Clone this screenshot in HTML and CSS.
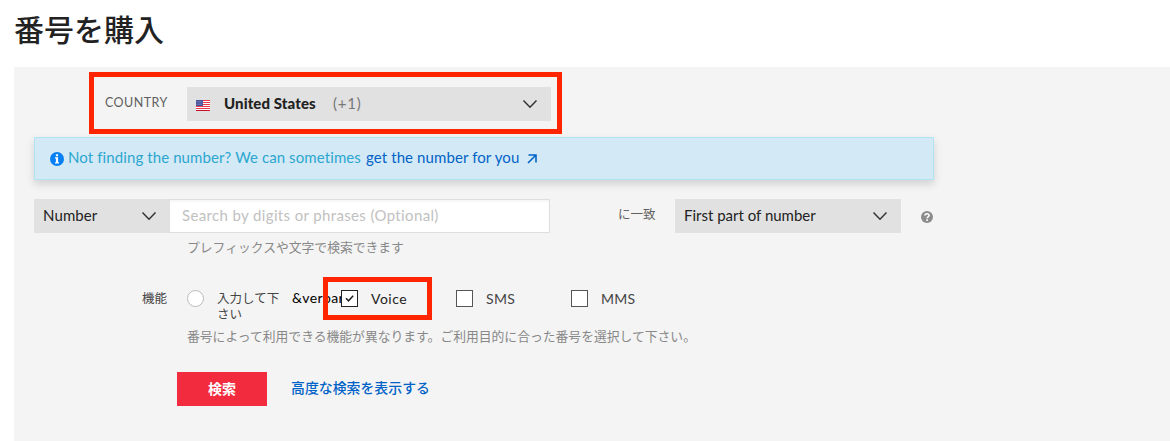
FILE: index.html
```html
<!DOCTYPE html>
<html lang="ja">
<head>
<meta charset="utf-8">
<title>番号を購入</title>
<link rel="stylesheet" href="styles.css">
</head>
<body>
<h1 class="title"><span class="t">番号を購入</span></h1>
<main class="panel">
  <div class="row country-row">
    <span class="country-label"><span class="t">COUNTRY</span></span>
    <div class="select country-select">
      <svg class="flag" width="14" height="11" viewBox="0 0 14 11"><path fill="#fff" d="M0 0h14v11H0z"/><path fill="#e8384a" d="M0 0h14v1H0zM0 2h14v1H0zM0 4h14v1H0zM0 6h14v1H0zM0 8h14v1H0z"/><path fill="#c8102e" d="M0 10h14v1H0z"/><path fill="#46529c" d="M0 0h7v6H0z"/><path stroke="#a9b0dc" stroke-width=".6" stroke-dasharray="1 1" d="M.5 1.5h6M1.5 3h5M.5 4.5h6"/></svg>
      <b class="country-name t">United States</b>
      <span class="dial t">(+1)</span>
      <svg class="chevron" width="16" height="10" viewBox="0 0 16 10"><path d="M1.5 1.5 8 8.2l6.500-6.700"/></svg>
    </div>
    <span class="highlight highlight-country"></span>
  </div>
  <div class="alert">
    <svg class="info" width="14" height="14" viewBox="0 0 14 14"><circle cx="7" cy="7" r="7" fill="#0780f5"/><path fill="#fff" d="M5.900 2.200h2.200v2H5.900zM5 5.200h3.100v5H9v1.300H5v-1.300h.9V6.500H5z"/></svg>
    <span class="alert-text t">Not finding the number? We can sometimes</span>
    <a class="alert-link t">get the number for you</a>
    <svg class="arrow" width="10" height="10" viewBox="0 0 10 10"><path d="M1 9 9 1M1.500 1H9v7.500"/></svg>
  </div>
  <div class="row number-row">
    <div class="select number-select"><span class="t number-text">Number</span><svg class="chevron" width="16" height="10" viewBox="0 0 16 10"><path d="M1.500 1.500 8 8.200l6.500-6.700"/></svg></div>
    <div class="search"><span class="t search-text">Search by digits or phrases (Optional)</span></div>
    <span class="match"><span class="t">に一致</span></span>
    <div class="select match-select"><span class="t match-text">First part of number</span><svg class="chevron" width="16" height="10" viewBox="0 0 16 10"><path d="M1.500 1.500 8 8.200l6.500-6.700"/></svg></div>
    <svg class="help" width="12" height="12" viewBox="0 0 12 12"><circle cx="6" cy="6" r="6" fill="#8c8c8c"/><path d="M4 4.600C4 2.200 8 2.200 8 4.400 8 5.900 6.100 5.700 6.100 7.300M6.100 8.300v1.600" fill="none" stroke="#fff" stroke-width="1.600"/></svg>
  </div>
  <p class="hint"><span class="t">プレフィックスや文字で検索できます</span></p>
  <div class="row capability-row">
    <span class="cap-label">機能</span>
    <span class="radio"></span>
    <span class="any">入力して下さい</span>
    <span class="verbar t">&amp;verbar</span>
    <div class="check voice"><span class="box checked"><svg width="15" height="15" viewBox="0 0 15 15"><path d="m4 7.300 2.500 2.500 4.700-5"/></svg></span><span class="check-text t">Voice</span></div>
    <div class="check sms"><span class="box"></span><span class="check-text t">SMS</span></div>
    <div class="check mms"><span class="box"></span><span class="check-text t">MMS</span></div>
    <span class="highlight highlight-voice"></span>
  </div>
  <p class="hint capability-hint"><span class="t">番号によって利用できる機能が異なります。ご利用目的に合った番号を選択して下さい。</span></p>
  <div class="row actions">
    <button class="submit">検索</button>
    <a class="advanced"><span class="t">高度な検索を表示する</span></a>
  </div>
</main>
</body>
</html>
```
FILE: styles.css
```css
* { box-sizing: border-box; }
body { margin: 0; height: 441px; overflow: hidden; background: #fff; color: #222; font: 15px/20px Lato, "Noto Sans CJK JP", sans-serif; font-variant-ligatures: none; }
.title { margin: 0 0 0 14px; height: 67px; padding-top: 8px; font: 500 30px/40px "Noto Sans CJK JP", sans-serif; color: #222; }
.panel { margin-left: 14px; height: 374px; padding: 20px 0 0 20px; background: #f4f4f4; }
.t { white-space: nowrap; }
.row { display: flex; position: relative; }
.country-row { height: 34px; align-items: center; }
.country-label { width: 153px; padding: 0 0 3px 71px; font: 12.500px/18px Lato, sans-serif; letter-spacing: .45px; color: #606060; }
.select { display: flex; align-items: center; height: 34px; background: #e1e1e1; }
.select .t, .search .t { padding-bottom: 2px; }
.country-select { width: 364px; padding: 0 13px 0 9px; }
.flag { margin-top: 3px; }
.country-name { margin-left: 14px; width: 95px; font-weight: 900; letter-spacing: .1px; }
.dial { margin-left: 14px; color: #777; letter-spacing: .8px; }
.chevron { margin-left: auto; fill: none; stroke: #333; stroke-width: 1.500px; }
.highlight { position: absolute; border: 5px solid #ff2500; }
.highlight-country { left: 55px; top: -15px; width: 473px; height: 62px; }
.alert { display: flex; align-items: center; width: 900px; height: 43px; margin-top: 16px; padding-left: 15px; border: 1px solid #b0e4f2; background: #d4e9f6; box-shadow: 0 4px 8px rgba(0,0,0,.15); }
.alert .t { padding-bottom: 3px; }
.alert-text { margin-left: 4px; width: 298px; color: #2ba7cf; letter-spacing: .1px; }
.alert-link { color: #0263c7; width: 153px; letter-spacing: .1px; }
.arrow { margin-left: 8px; fill: none; stroke: #0263c7; stroke-width: 1.600px; }
.number-row { margin-top: 19px; align-items: center; }
.number-select { width: 136px; padding: 0 13px 0 9px; }
.number-text { letter-spacing: .1px; }
.search { display: flex; align-items: center; width: 380px; height: 34px; padding-left: 12px; border: 1px solid #dedede; border-left: 0; background: #fff; color: #c1c1c1; box-shadow: inset 0 2px 2px #f7f7f7; }
.search-text { letter-spacing: .36px; }
.match { width: 57px; margin: 0 0 5px 68px; color: #606060; font: 12.500px/18px "Noto Sans CJK JP", sans-serif; }
.match-select { width: 226px; padding: 0 13px 0 9px; }
.help { margin: 2px 0 0 20px; }
.hint { margin: 4px 0 0 153px; font: 12.800px/20px "Noto Sans CJK JP", sans-serif; color: #888; }
.capability-row { height: 43px; margin-top: 31px; font: 12.500px/16px "Noto Sans CJK JP", sans-serif; color: #444; align-items: flex-start; }
.cap-label { width: 25px; margin-left: 108px; padding-top: 2px; white-space: nowrap; }
.radio { width: 17px; height: 17px; margin: 2px 0 0 20px; border: 1px solid #bbb; border-radius: 50%; background: #fff; }
.any { width: 63px; margin: 2px 0 0 13px; }
.verbar { width: 49px; margin: 2px 0 0 12px; color: #000; font: 14px/16px Lato, sans-serif; letter-spacing: .4px; }
.check { display: flex; align-items: center; height: 17px; margin-top: 2px; width: 115px; }
.box { position: relative; width: 17px; height: 17px; border: 1px solid #555; background: #fff; }
.checked { border-color: #222; }
.box svg { display: block; fill: none; stroke: #222; stroke-width: 1.500px; }
.check-text { margin: 0 0 0 13px; font: 14px/17px Lato, sans-serif; letter-spacing: .3px; color: #444; }
.voice .check-text { color: #222; letter-spacing: .5px; }
.highlight-voice { left: 289px; top: -11px; width: 109px; height: 43px; }
.capability-hint { margin-top: -5px; }
.actions { margin: 26px 0 0 143px; align-items: center; }
.submit { width: 90px; height: 34px; padding: 0 0 2px; border: 0; background: #f22b3f; color: #fff; font: 700 14px/20px "Noto Sans CJK JP", sans-serif; }
.advanced { margin-left: 24px; padding-bottom: 4px; color: #0263c7; font: 500 13.900px/20px "Noto Sans CJK JP", sans-serif; }
```
